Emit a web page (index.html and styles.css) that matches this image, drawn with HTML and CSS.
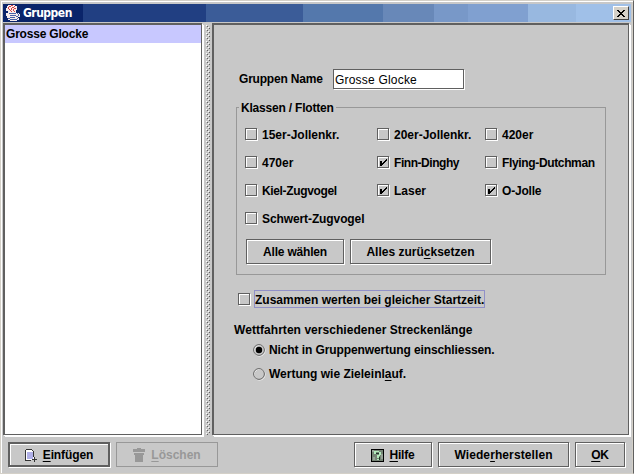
FILE: index.html
```html
<!DOCTYPE html>
<html lang="de">
<head>
<meta charset="utf-8">
<title>Gruppen</title>
<link rel="stylesheet" href="styles.css">
</head>
<body>
<svg width="0" height="0" class="defs"><symbol id="tick" viewBox="0 0 10 10"><path shape-rendering="crispEdges" d="M2 4h2v2h1V5h1V4h1V3h1V2h1v2H8v1H7v1H6v1H5v1H4v1H2z"/></symbol></svg>
<div class="window">
  <header class="titlebar">
    <svg class="logo" width="16" height="16" viewBox="0 0 16 16" shape-rendering="crispEdges">
      <path fill="#f6ecec" d="M3 0h7v1h2v4h-1v3h3v1h1v3h-2v1h1v2h-2v1H5v-1H3v-2H2v-2H1V8h2V6H1V3h1V1h1z"/>
      <path fill="#d84040" d="M6 0h2v1H6zM4 1h2v1H4zM3 2h1v2H3zM9 1h1v1H9zM7 2h2v1H7zM6 3h1v2H6zM9 3h2v1H9zM4 4h1v1H4zM8 4h1v2H8zM5 5h1v1H5zM6 6h1v1H6zM9 6h1v1H9z"/>
      <path fill="#4a62a8" d="M4 8h7v1H4zM12 8h1v1h-1zM13 9h1v2h-1zM5 10h6v1H5zM11 11h2v1h-2zM5 12h5v1H5zM3 13h2v1H3zM5 14h7v1H5zM12 13h1v1h-1z"/>
    </svg>
    <h1>Gruppen</h1>
    <button class="close" aria-label="Schließen"><svg width="8" height="7" viewBox="0 0 8 7" shape-rendering="crispEdges"><path d="M0 0h2v1h1v1h2V1h1V0h2v1H7v1H6v1H5v1h1v1h1v1h1v1H6V6H5V5H3v1H2v1H0V6h1V5h1V4h1V3H2V2H1V1H0z"/></svg></button>
  </header>
  <main class="split">
    <ul class="list"><li class="snug">Grosse Glocke</li></ul>
    <div class="divider"></div>
    <section class="detail">
      <label class="name"><span class="snug">Gruppen Name</span><input value="Grosse Glocke"></label>
      <fieldset class="classes">
        <legend class="snug">Klassen / Flotten</legend>
        <div class="grid">
          <label class="check"><i class="box"></i><span>15er-Jollenkr.</span></label>
          <label class="check"><i class="box"></i><span>20er-Jollenkr.</span></label>
          <label class="check"><i class="box"></i><span>420er</span></label>
          <label class="check"><i class="box"></i><span>470er</span></label>
          <label class="check"><i class="box"><svg><use href="#tick"/></svg></i><span class="tight">Finn-Dinghy</span></label>
          <label class="check"><i class="box"></i><span class="snugger">Flying-Dutchman</span></label>
          <label class="check"><i class="box"></i><span class="snugger">Kiel-Zugvogel</span></label>
          <label class="check"><i class="box"><svg><use href="#tick"/></svg></i><span>Laser</span></label>
          <label class="check"><i class="box"><svg><use href="#tick"/></svg></i><span class="snug">O-Jolle</span></label>
          <label class="check"><i class="box"></i><span class="slight">Schwert-Zugvogel</span></label>
        </div>
        <div class="actions">
          <button class="btn all"><span class="snug">Alle wählen</span></button>
          <button class="btn reset"><span>Alles zurü<u>c</u>ksetzen</span></button>
        </div>
      </fieldset>
      <label class="check together"><i class="box"></i><span class="focus">Zusammen werten bei gleicher Startzeit.</span></label>
      <p class="caption">Wettfahrten verschiedener Streckenlänge</p>
      <label class="radio"><svg width="13" height="13" viewBox="0 0 13 13"><circle cx="6.500" cy="6.500" r="5.500" class="lit"/><circle cx="6" cy="6" r="5.400" class="ring"/><circle cx="6" cy="6" r="3.200"/></svg><span class="slight">Nicht in Gruppenwertung einschliessen.</span></label>
      <label class="radio"><svg width="13" height="13" viewBox="0 0 13 13"><circle cx="6.500" cy="6.500" r="5.500" class="lit"/><circle cx="6" cy="6" r="5.400" class="ring"/></svg><span>Wertung wie Zieleinl<u>a</u>uf.</span></label>
    </section>
  </main>
  <footer class="buttons">
    <button class="btn insert"><svg width="12" height="13" viewBox="0 0 12 13" shape-rendering="crispEdges"><path fill="#fff" d="M1 1h6l2 2v8H1z"/><path fill="#b0b0e8" d="M2 3h6v7H2z"/><path fill="none" stroke="#333" d="M.500 .500h6l2 2v5M.500 .500v11h5M9.500 8v5M7 10.500h5"/></svg><span class="slight"><u>E</u>infügen</span></button>
    <button class="btn delete" disabled><svg width="12" height="14" viewBox="0 0 12 14" shape-rendering="crispEdges"><path d="M4 0h4v1h4v3H0V1h4zM1 5h10v2h-1v7H2V7H1z"/></svg><span><u>L</u>öschen</span></button>
    <span class="spacer"></span>
    <button class="btn help"><svg width="13" height="13" viewBox="0 0 13 13" shape-rendering="crispEdges"><path fill="#758475" stroke="#000" d="M.500 .500h12v12H.500z"/><path fill="#98a498" d="M1 1h2v2H1zM10 5h2v5h-2zM2 8h2v3H2z"/><path fill="#20382a" d="M5 4h3v1H5zM8 8h1v3H8z"/><path fill="#b4ecbc" d="M3 2h2v3H3zM5 2h3v1H5zM8 3h2v3H8zM6 6h3v1H6zM6 7h2v2H6zM6 10h2v1H6z"/></svg><span class="snug"><u>H</u>ilfe</span></button>
    <button class="btn restore"><span>Wiede<u>r</u>herstellen</span></button>
    <button class="btn ok"><span class="snug"><u>O</u>K</span></button>
  </footer>
</div>
</body>
</html>
```
FILE: styles.css
```css
* { box-sizing: border-box; }
body { margin: 0; width: 634px; height: 474px; overflow: hidden; background: #c8c8c8; color: #000; font: bold 12px/14px "Liberation Sans", Arial, sans-serif; }
h1, p, ul { margin: 0; padding: 0; list-style: none; }
button, input { font: inherit; color: inherit; }
u { text-underline-offset: 2px; text-decoration-thickness: 1px; text-decoration-skip-ink: none; }
.defs { display: block; height: 0; }
.slight { letter-spacing: -.1px; }
.snug { letter-spacing: -.2px; }
.snugger { letter-spacing: -.35px; }
.tight { letter-spacing: -.45px; }
.window { width: 634px; height: 474px; display: flex; flex-direction: column; border: 1px solid #d4d0c8; border-right-color: #606060; box-shadow: inset 1px 1px #fff, inset -1px 0 #d4d0c8; padding: 3px 2px 2px 2px; }
.titlebar { height: 18px; flex: none; display: flex; align-items: center; padding: 0 2px; background: linear-gradient(90deg, #0a246a 0 80px, #213f82 80px 203px, #3b5c98 203px 300px, #5478ac 300px 380px, #6888b8 380px 431px, #7898c8 431px 465px, #80a0d0 465px 525px, #98b8e0 525px 573px, #a0c0e8 573px); }
.titlebar h1 { flex: 1; color: #fff; font: bold 12px/16px "DejaVu Sans Condensed", "DejaVu Sans", sans-serif; margin-left: 2px; letter-spacing: -.5px; }
.close { width: 16px; height: 14px; padding: 0; display: flex; align-items: center; justify-content: center; background: #d4d0c8; border: 1px solid #fff; border-right-color: #404040; border-bottom-color: #404040; }
.split { height: 412px; flex: none; display: flex; margin-top: 1px; }
.list { width: 199px; background: #fff; border: 2px solid #606060; border-right-width: 1px; border-bottom-width: 1px; box-shadow: 1px 1px #fff, 2px 2px #fff; }
.list li { height: 18px; line-height: 19px; background: #c8c8ff; padding-left: 1px; }
.divider { width: 10px; padding: 2px 2px 0 4px; background: conic-gradient(from 270deg at 1px 1px, #fff 90deg, transparent 0) 0 0 / 4px 4px, conic-gradient(from 270deg at 1px 1px, #fff 90deg, transparent 0) 2px 2px / 4px 4px, conic-gradient(from 270deg at 1px 1px, #606060 90deg, transparent 0) 1px 1px / 4px 4px, conic-gradient(from 270deg at 1px 1px, #606060 90deg, transparent 0) 3px 3px / 4px 4px; background-origin: content-box; background-clip: content-box; }
.detail { flex: 1; border: 1px solid #606060; border-top-width: 2px; border-left-width: 2px; box-shadow: 1px 1px #fff, 2px 2px #fff; margin-right: 2px; padding: 43px 20px 0 21px; }
.name { display: flex; align-items: center; height: 21px; margin-left: 4px; }
.name span { width: 94px; padding-top: 1px; }
.name input { width: 131px; height: 20px; font-weight: normal; border: 1px solid #606060; padding: 2px 1px 0; background: #fff; box-shadow: 1px 1px #fff; outline: 0; letter-spacing: .2px; }
.classes { margin: 11px 0 0 1px; border: 1px solid #989898; height: 175px; padding: 0 0 0 8px; width: 368px; }
.classes legend { padding: 1px 2px 0; margin-left: -6px; height: 14px; }
.grid { display: grid; grid-template-columns: 132px 108px 120px; grid-auto-rows: 28px; padding-top: 6px; }
.check { display: flex; align-items: center; white-space: nowrap; }
.grid .check span { padding-top: 2px; }
.box { width: 12px; height: 12px; flex: none; border: 1px solid #606060; box-shadow: 1px 1px #fff, inset 1px 1px #fff; margin-right: 5px; }
.box svg { display: block; width: 10px; height: 10px; }
.actions { display: flex; gap: 6px; margin-top: 7px; margin-left: 1px; }
.btn { display: flex; align-items: center; justify-content: center; height: 25px; padding: 1px 0 0; background: #c8c8c8; border: 1px solid #606060; box-shadow: 1px 1px #fff, inset 1px 1px #fff; white-space: nowrap; }
.all { width: 98px; }
.reset { width: 141px; }
.together { margin: 15px 0 0 3px; height: 18px; }
.together .box { margin-right: 4px; }
.focus { border: 1px solid #9090c8; height: 18px; line-height: 18px; }
.caption { margin: 15px 0 0 -1px; letter-spacing: .05px; }
.radio { display: flex; align-items: center; height: 24px; margin-left: 18px; }
.caption + .radio { margin-top: 1px; }
.radio svg { margin-right: 3px; }
.lit, .ring { fill: none; stroke: #fff; }
.ring { stroke: #606060; }
.buttons { display: flex; gap: 6px; margin-top: 7px; padding: 0 6px 0 5px; }
.btn svg { margin-right: 5px; }
.insert { width: 102px; border-width: 2px; }
.insert svg { margin-right: 6px; }
.delete { width: 102px; color: #989898; fill: #989898; border-color: #989898; box-shadow: none; }
.delete svg { margin-right: 6px; }
.spacer { flex: 1; }
.help { width: 78px; }
.restore { width: 131px; letter-spacing: .1px; }
.ok { width: 50px; }
```
